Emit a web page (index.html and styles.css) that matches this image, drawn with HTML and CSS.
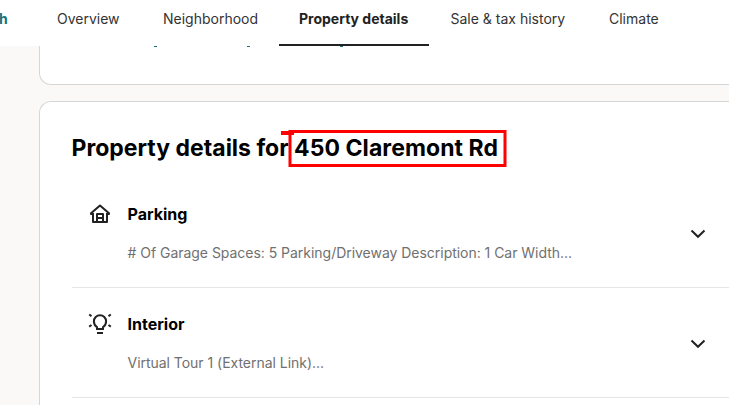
FILE: index.html
```html
<!DOCTYPE html>
<html lang="en">
<head>
<meta charset="utf-8">
<title>Property details</title>
<link rel="stylesheet" href="styles.css">
</head>
<body>
<nav class="tabs">
  <a class="tab search"><span>h</span></a>
  <a class="tab"><span>Overview</span></a>
  <a class="tab"><span>Neighborhood</span></a>
  <a class="tab active"><span>Property details</span></a>
  <a class="tab"><span>Sale &amp; tax history</span></a>
  <a class="tab"><span>Climate</span></a>
</nav>
<main>
  <section class="card previous"><div class="link-tails"><i></i><i></i><i></i></div></section>
  <section class="card details">
    <h2>Property details for <span class="address">450 Claremont Rd<svg class="mark" width="228" height="40" viewBox="0 0 228 40" fill="none" stroke="#f00" stroke-width="3"><path d="M1 5H14" stroke-width="4"/><path d="M10 3.500H225V37.500H10Z"/></svg></span></h2>
    <div class="row">
      <svg class="icon" width="24" height="24" viewBox="0 0 24 24" fill="none" stroke="#222" stroke-width="2" stroke-linejoin="round"><path d="M5 12H3v-.8L12 3.600l9 7.600v.8h-2M5 11v9h14v-9M9 20v-8h6v8M9 16h6"/></svg>
      <div class="copy"><h3>Parking</h3><p>#&nbsp;Of Garage Spaces: 5 Parking/Driveway Description: 1 Car Width...</p></div>
      <svg class="chevron" width="16" height="10" viewBox="0 0 16 10" fill="none" stroke="#222" stroke-width="2"><path d="m1.5 1.5 6.5 6.3 6.5-6.3"/></svg>
    </div>
    <div class="row">
      <svg class="icon" width="24" height="24" viewBox="0 0 24 24" fill="none" stroke="#222" stroke-width="2"><path d="M9 17v-1.800C7 14 5.900 12 5.900 9.300a6.100 6.100 0 0 1 12.200 0c0 2.700-1.100 4.700-3.100 5.900V17ZM9 21h6M1.200 2.500l2.300 1.600M22.800 2.500l-2.300 1.600M1.200 14.600l2.300-1.600M22.800 14.600l-2.300-1.600"/></svg>
      <div class="copy"><h3>Interior</h3><p>Virtual Tour 1 (External Link)...</p></div>
      <svg class="chevron" width="16" height="10" viewBox="0 0 16 10" fill="none" stroke="#222" stroke-width="2"><path d="m1.5 1.5 6.5 6.3 6.5-6.3"/></svg>
    </div>
  </section>
</main>
</body>
</html>
```
FILE: styles.css
```css
* { box-sizing: border-box; }
body {
  margin: 0;
  width: 729px;
  height: 405px;
  overflow: hidden;
  background: #faf9f8;
  font-family: Inter, "Liberation Sans", sans-serif;
  color: #000;
}
.tabs {
  display: grid;
  grid-template-columns: 37px 106px 136px 150px 160px 140px;
  height: 46px;
  background: #fff;
}
.tab {
  padding: 9px 0 0 20px;
  font-size: 14px;
  line-height: 20px;
  color: #333;
  white-space: nowrap;
}
.tab.search {
  padding-left: 0;
  margin-left: -1px;
  font-weight: 700;
  color: #15727a;
}
.tab.active {
  border-bottom: 2px solid #222;
  font-weight: 700;
  color: #222;
}
.tab:nth-child(n+5) { padding-left: 21.5px; }
.tab:last-child { padding-left: 20px; }
main { padding-left: 39px; }
.card {
  background: #fff;
  border: 1px solid #d6d6d6;
  border-right: 0;
  border-radius: 12px 0 0 12px;
}
.previous {
  height: 39px;
  border-top: 0;
  border-radius: 0 0 0 12px;
}
.link-tails {
  display: flex;
  gap: 90px;
  padding-left: 114px;
}
.link-tails i {
  width: 3px;
  height: 1px;
  background: #15727a;
}
.details {
  height: 304px;
  margin-top: 16px;
  padding: 30px 0 0 31.5px;
  border-bottom: 0;
  border-radius: 12px 0 0;
}
h2 {
  margin: 0;
  font-size: 23px;
  line-height: 32px;
  font-weight: 700;
  white-space: nowrap;
}
.address {
  position: relative;
  letter-spacing: 0.07px;
}
.mark { position: absolute; left: -14px; top: -6px; }
.row {
  display: flex;
  height: 110px;
  border-bottom: 1px solid #e6e6e6;
}
h2 + .row { margin-top: 14px; }
.icon { flex: none; margin: 24px 15.5px 0 16.5px; }
.copy { width: 562.5px; }
h3 {
  margin: 25px 0 0;
  font-size: 16px;
  line-height: 22px;
  font-weight: 700;
}
p {
  margin: 18px 0 0;
  font-size: 14px;
  line-height: 20px;
  letter-spacing: -0.03px;
  color: #707070;
  white-space: nowrap;
}
.chevron { flex: none; margin-top: 51px; }
```
